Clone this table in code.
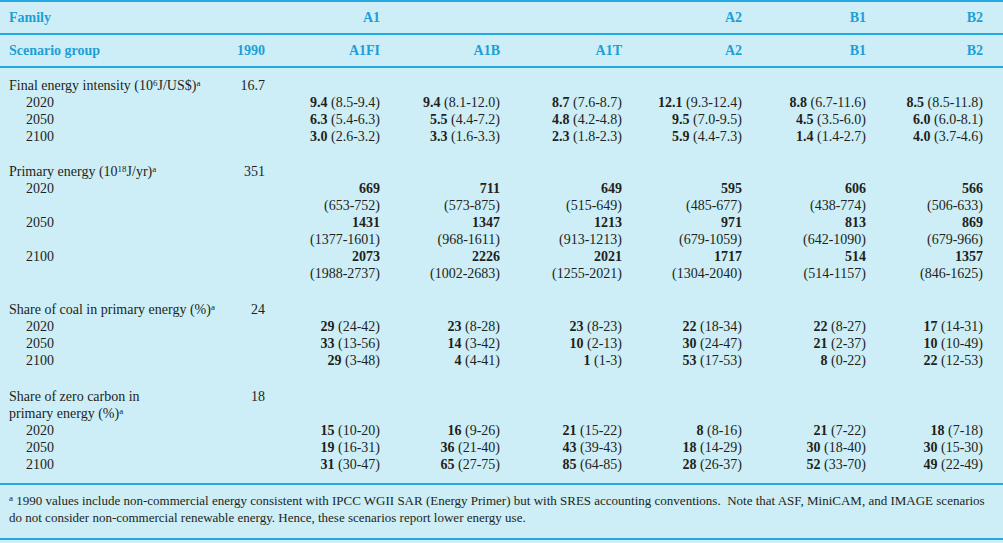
const cols = 'grid grid-cols-[191px_65px_115px_120px_122px_120px_124px_117px] pl-[9px]'

type Cell = [string, string] | null

const Sup = ({ children }: { children: React.ReactNode }) => <sup className="text-[9px]">{children}</sup>

const sections: { title: React.ReactNode[]; base: string; rows: { year: string; cells: Cell[]; stacked?: boolean }[]; gapAfter: string }[] = [
  {
    title: [
      <>
        Final energy intensity (10<Sup>6</Sup>J/US$)<Sup>a</Sup>
      </>,
    ],
    base: '16.7',
    gapAfter: 'h-[18px]',
    rows: [
      { year: '2020', cells: [['9.4', '(8.5-9.4)'], ['9.4', '(8.1-12.0)'], ['8.7', '(7.6-8.7)'], ['12.1', '(9.3-12.4)'], ['8.8', '(6.7-11.6)'], ['8.5', '(8.5-11.8)']] },
      { year: '2050', cells: [['6.3', '(5.4-6.3)'], ['5.5', '(4.4-7.2)'], ['4.8', '(4.2-4.8)'], ['9.5', '(7.0-9.5)'], ['4.5', '(3.5-6.0)'], ['6.0', '(6.0-8.1)']] },
      { year: '2100', cells: [['3.0', '(2.6-3.2)'], ['3.3', '(1.6-3.3)'], ['2.3', '(1.8-2.3)'], ['5.9', '(4.4-7.3)'], ['1.4', '(1.4-2.7)'], ['4.0', '(3.7-4.6)']] },
    ],
  },
  {
    title: [
      <>
        Primary energy (10<Sup>18</Sup>J/yr)<Sup>a</Sup>
      </>,
    ],
    base: '351',
    gapAfter: 'h-[19px]',
    rows: [
      { year: '2020', stacked: true, cells: [['669', '(653-752)'], ['711', '(573-875)'], ['649', '(515-649)'], ['595', '(485-677)'], ['606', '(438-774)'], ['566', '(506-633)']] },
      { year: '2050', stacked: true, cells: [['1431', '(1377-1601)'], ['1347', '(968-1611)'], ['1213', '(913-1213)'], ['971', '(679-1059)'], ['813', '(642-1090)'], ['869', '(679-966)']] },
      { year: '2100', stacked: true, cells: [['2073', '(1988-2737)'], ['2226', '(1002-2683)'], ['2021', '(1255-2021)'], ['1717', '(1304-2040)'], ['514', '(514-1157)'], ['1357', '(846-1625)']] },
    ],
  },
  {
    title: [
      <>
        Share of coal in primary energy (%)<Sup>a</Sup>
      </>,
    ],
    base: '24',
    gapAfter: 'h-[19px]',
    rows: [
      { year: '2020', cells: [['29', '(24-42)'], ['23', '(8-28)'], ['23', '(8-23)'], ['22', '(18-34)'], ['22', '(8-27)'], ['17', '(14-31)']] },
      { year: '2050', cells: [['33', '(13-56)'], ['14', '(3-42)'], ['10', '(2-13)'], ['30', '(24-47)'], ['21', '(2-37)'], ['10', '(10-49)']] },
      { year: '2100', cells: [['29', '(3-48)'], ['4', '(4-41)'], ['1', '(1-3)'], ['53', '(17-53)'], ['8', '(0-22)'], ['22', '(12-53)']] },
    ],
  },
  {
    title: [
      <>Share of zero carbon in</>,
      <>
        primary energy (%)<Sup>a</Sup>
      </>,
    ],
    base: '18',
    gapAfter: 'h-0',
    rows: [
      { year: '2020', cells: [['15', '(10-20)'], ['16', '(9-26)'], ['21', '(15-22)'], ['8', '(8-16)'], ['21', '(7-22)'], ['18', '(7-18)']] },
      { year: '2050', cells: [['19', '(16-31)'], ['36', '(21-40)'], ['43', '(39-43)'], ['18', '(14-29)'], ['30', '(18-40)'], ['30', '(15-30)']] },
      { year: '2100', cells: [['31', '(30-47)'], ['65', '(27-75)'], ['85', '(64-85)'], ['28', '(26-37)'], ['52', '(33-70)'], ['49', '(22-49)']] },
    ],
  },
]

function Line() {
  return <div className="h-[2px] bg-[#22a9e1]" />
}

export default function App() {
  return (
    <div className="w-[1003px] h-[543px] bg-[#cdeef6] text-[14px] text-[#231f20] font-['Liberation_Serif',serif] overflow-hidden">
      <Line />
      <div className={`${cols} h-[31px] items-center font-bold text-[#1c9fd8]`}>
        <div>Family</div>
        <div />
        <div className="text-right">A1</div>
        <div />
        <div />
        <div className="text-right">A2</div>
        <div className="text-right">B1</div>
        <div className="text-right">B2</div>
      </div>
      <Line />
      <div className={`${cols} h-[31px] items-center font-bold text-[#1c9fd8]`}>
        <div>Scenario group</div>
        <div className="text-right">1990</div>
        <div className="text-right">A1FI</div>
        <div className="text-right">A1B</div>
        <div className="text-right">A1T</div>
        <div className="text-right">A2</div>
        <div className="text-right">B1</div>
        <div className="text-right">B2</div>
      </div>
      <Line />
      <div className="pt-[9px] pb-[10px] leading-[17px]">
        {sections.map((s, i) => (
          <div key={i}>
            {s.title.map((t, j) => (
              <div key={j} className={cols}>
                <div className="whitespace-nowrap">{t}</div>
                <div className="text-right">{j === 0 ? s.base : ''}</div>
              </div>
            ))}
            {s.rows.map((r) => (
              <div key={r.year} className={cols}>
                <div className="pl-[17px]">{r.year}</div>
                <div />
                {r.cells.map((c, k) => (
                  <div key={k} className="text-right whitespace-nowrap">
                    {c &&
                      (r.stacked ? (
                        <>
                          <div className="font-bold">{c[0]}</div>
                          <div>{c[1]}</div>
                        </>
                      ) : (
                        <>
                          <span className="font-bold">{c[0]}</span> {c[1]}
                        </>
                      ))}
                  </div>
                ))}
              </div>
            ))}
            <div className={s.gapAfter} />
          </div>
        ))}
      </div>
      <Line />
      <div className="pl-[9px] pt-[7px] pb-[12px] text-[13px] leading-[17px] whitespace-nowrap">
        <div>
          <Sup>a</Sup> 1990 values include non-commercial energy consistent with IPCC WGII SAR (Energy Primer) but with SRES accounting conventions.&nbsp; Note that ASF, MiniCAM, and IMAGE scenarios
        </div>
        <div>do not consider non-commercial renewable energy. Hence, these scenarios report lower energy use.</div>
      </div>
      <Line />
    </div>
  )
}
